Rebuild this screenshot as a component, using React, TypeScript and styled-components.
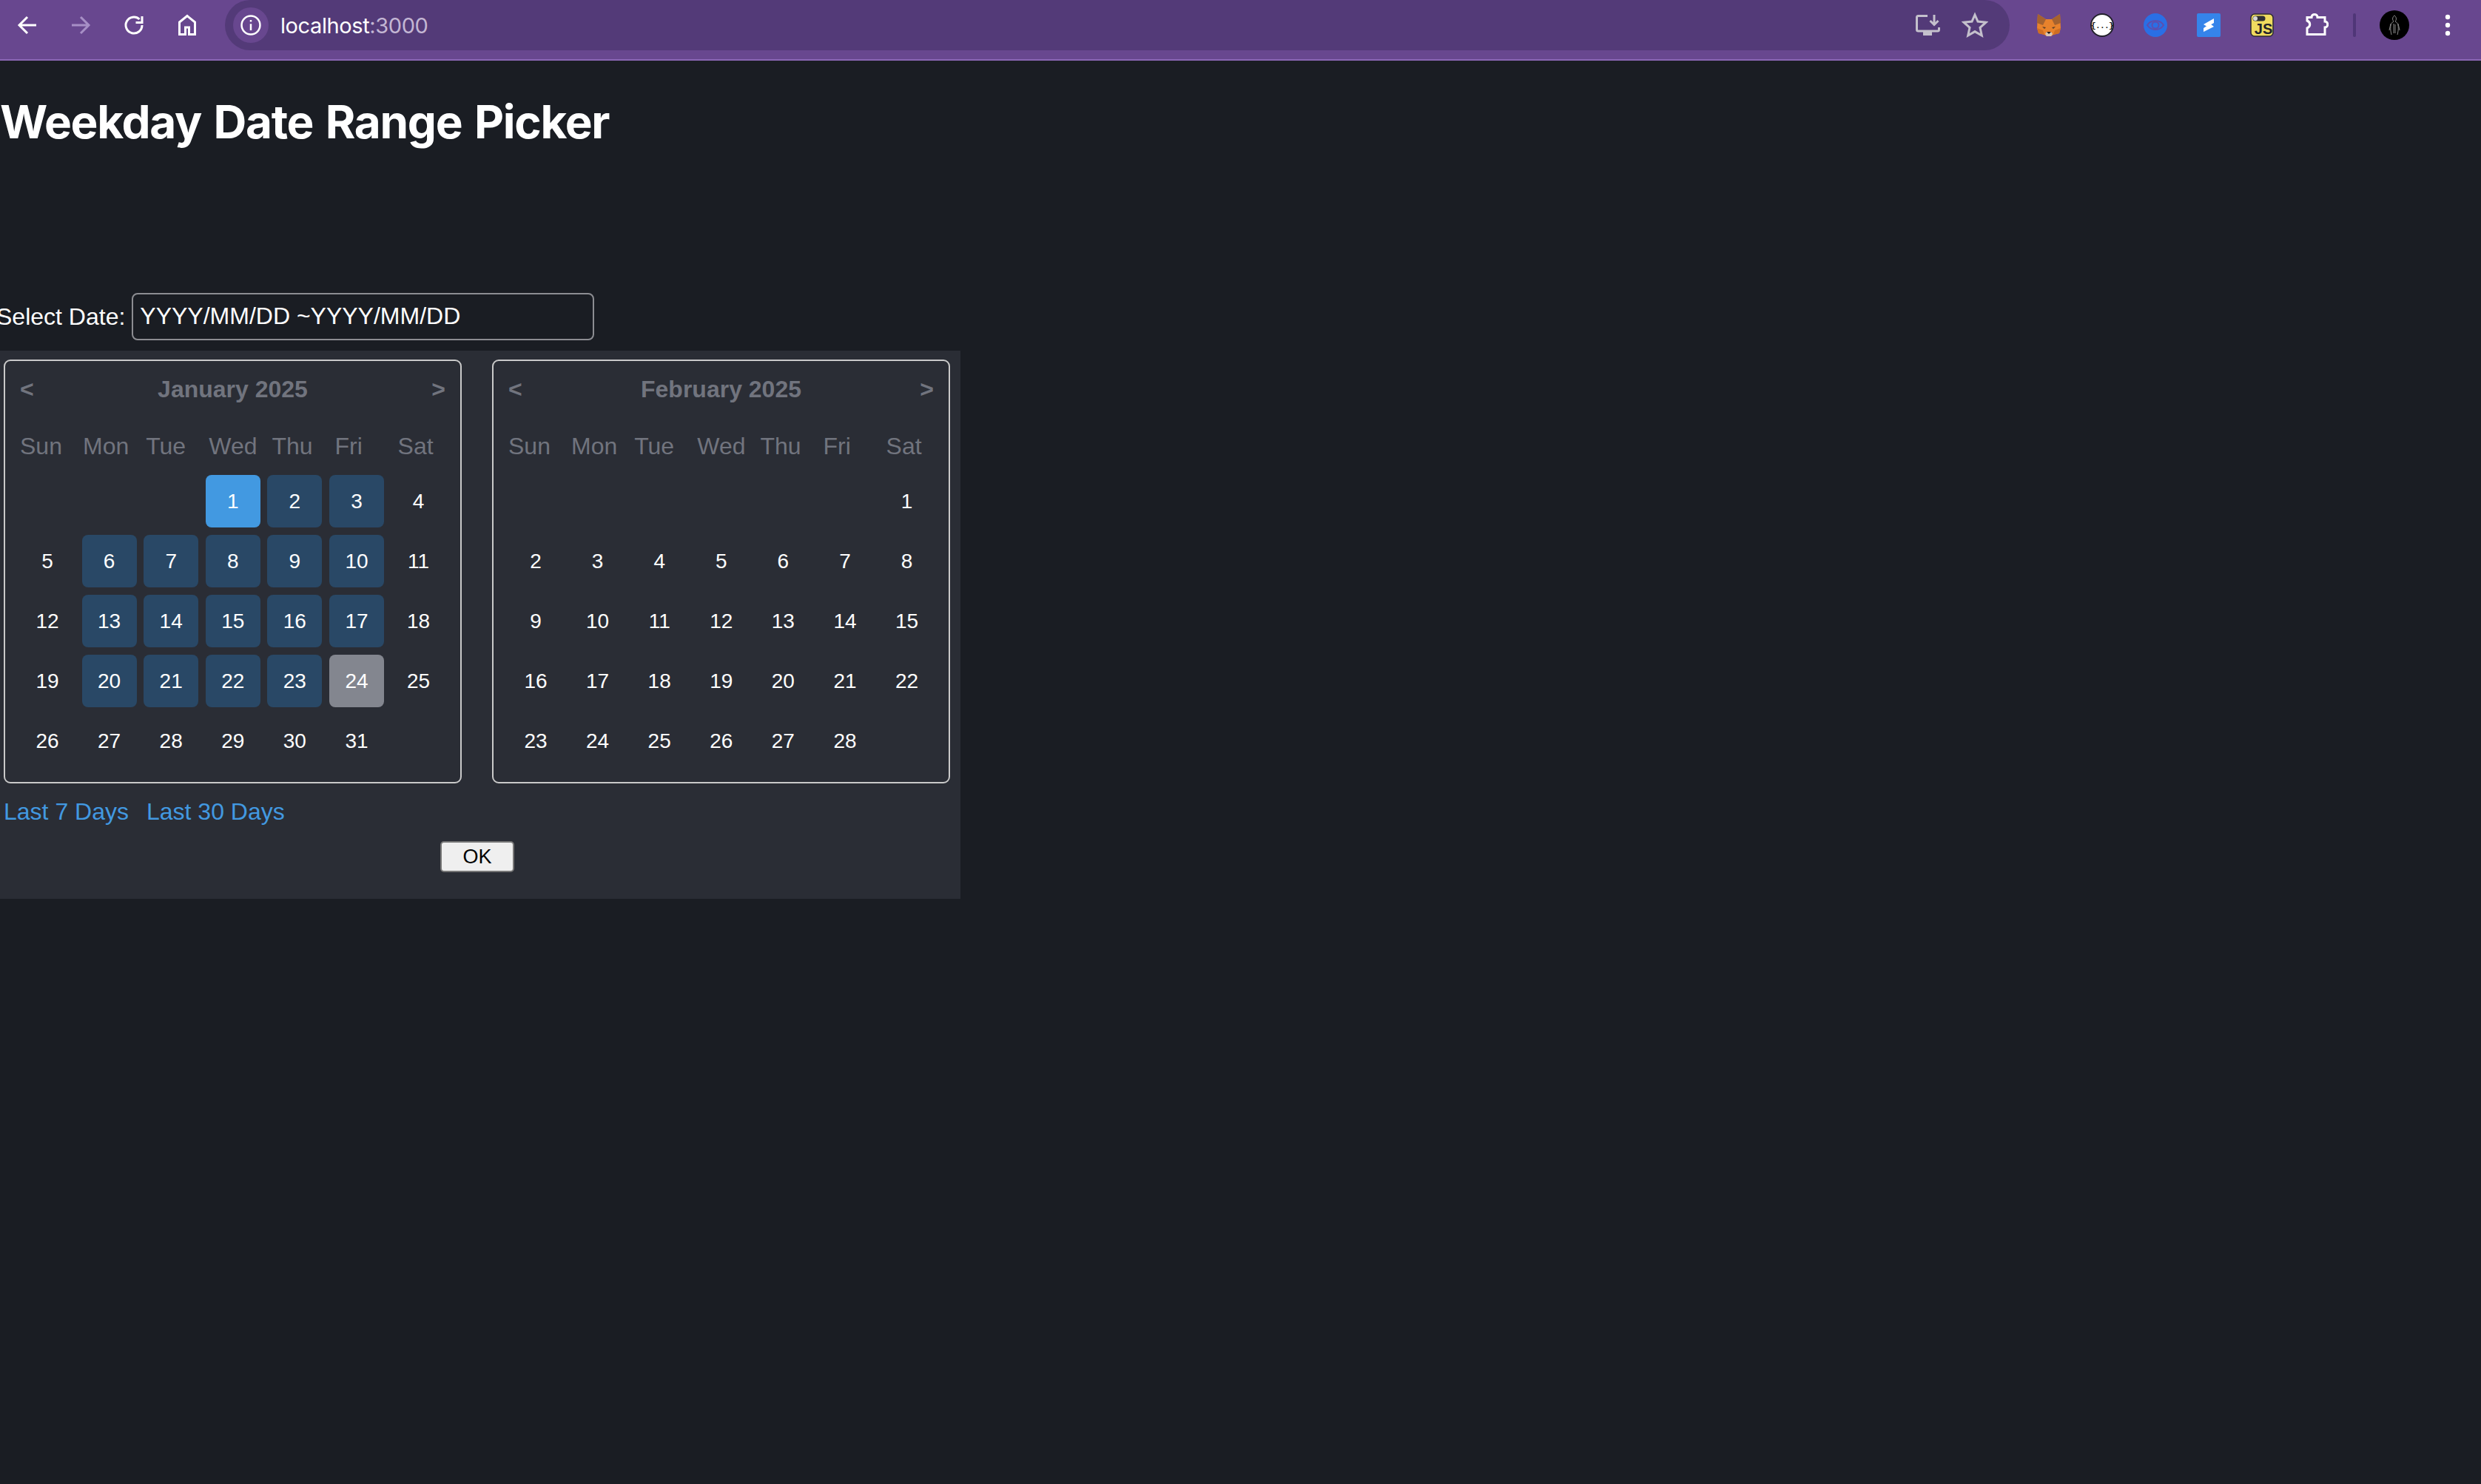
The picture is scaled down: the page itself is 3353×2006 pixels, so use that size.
import styled, { createGlobalStyle } from 'styled-components';

const GlobalStyle = createGlobalStyle`
  html, body {
    margin: 0;
    padding: 0;
    background-color: #1a1d23;
    overflow: hidden;
  }
`;

const Page = styled.div`
  width: 3353px;
  height: 2006px;
  background-color: #1a1d23;
  color: #fff;
  font-family: 'Liberation Sans', Arial, sans-serif;
  overflow: hidden;
`;

const Toolbar = styled.header`
  height: 80px;
  border-bottom: 2px solid #8a66b4;
  background-color: #68478f;
  display: flex;
  align-items: flex-start;
`;

const NavGroup = styled.nav`
  display: flex;
  padding-left: 1px;
  margin-right: 15px;
`;

const ToolButton = styled.div<{ $width?: number }>`
  width: ${(p) => p.$width ?? 72}px;
  height: 68px;
  display: flex;
  align-items: center;
  justify-content: center;
  flex-shrink: 0;
`;

const Omnibox = styled.div`
  width: 2412px;
  height: 68px;
  flex-shrink: 0;
  background-color: #533a78;
  border-radius: 34px;
  display: flex;
  align-items: center;
  padding: 0 0 0 11px;
  box-sizing: border-box;
`;

const SiteChip = styled.div`
  width: 48px;
  height: 48px;
  border-radius: 50%;
  background-color: #68478f;
  display: flex;
  align-items: center;
  justify-content: center;
`;

const Url = styled.span`
  margin-left: 16px;
  font-family: Inter, sans-serif;
  font-size: 29px;
  letter-spacing: -0.4px;
  color: #fff;
  flex: 1;
`;

const UrlPort = styled.span`
  color: #c3b6d3;
`;

const OmniActions = styled.div`
  display: flex;
  margin-right: 15px;
`;

const Extensions = styled.div`
  display: flex;
  margin-left: 17px;
  flex-shrink: 0;
`;

const Separator = styled.div`
  width: 4px;
  height: 32px;
  margin: 18px 18px 0 15px;
  border-radius: 2px;
  background-color: #4f3677;
`;

const Title = styled.h1`
  margin: 43px 0 191px;
  font-family: Inter, sans-serif;
  font-size: 62px;
  letter-spacing: -1.3px;
  word-spacing: 3.2px;
  line-height: 80px;
  font-weight: 700;
`;

const DateRow = styled.div`
  height: 64px;
  margin-bottom: 14px;
  display: flex;
  align-items: center;
`;

const DateLabel = styled.label`
  margin-left: -5px;
  margin-right: 9px;
  font-size: 32px;
`;

const DateInput = styled.input`
  width: 625px;
  height: 64px;
  box-sizing: border-box;
  border: 2px solid #8c8d92;
  border-radius: 8px;
  padding: 0 10px 2px 9px;
  background: transparent;
  color: #fff;
  font-family: inherit;
  font-size: 32px;
  outline: none;
`;

const Panel = styled.section`
  width: 1298px;
  height: 741px;
  box-sizing: border-box;
  padding: 12px 13px 36px 5px;
  background-color: #2a2d35;
`;

const Months = styled.div`
  display: flex;
  gap: 41px;
`;

const MonthBox = styled.div`
  width: 619px;
  height: 573px;
  box-sizing: border-box;
  border: 2px solid #c9c9c9;
  border-radius: 9px;
  padding: 18px 20px 0;
`;

const MonthHead = styled.div`
  height: 40px;
  display: flex;
  align-items: center;
  justify-content: space-between;
  color: #71747e;
  font-size: 32px;
  font-weight: 700;
`;

const WeekHead = styled.div`
  margin-top: 37px;
  display: grid;
  grid-template-columns: repeat(7, 85.1px);
  color: #71747e;
  font-size: 32px;
  line-height: 40px;
`;

const DayGrid = styled.div`
  margin-top: 19px;
  display: grid;
  grid-template-columns: repeat(7, 74px);
  grid-auto-rows: 71px;
  column-gap: 9.6px;
  row-gap: 10px;
`;

type DayKind = 'plain' | 'range' | 'start' | 'end';

const dayColors: Record<DayKind, string> = {
  plain: 'transparent',
  range: '#294866',
  start: '#4299e1',
  end: '#83868f',
};

const Day = styled.div<{ $kind: DayKind }>`
  display: flex;
  align-items: center;
  justify-content: center;
  border-radius: 8px;
  font-size: 28px;
  background-color: ${(p) => dayColors[p.$kind]};
`;

const Shortcuts = styled.div`
  margin-top: 18px;
  display: flex;
  gap: 24px;
  font-size: 32px;
  line-height: 40px;
  color: #4299e1;
`;

const Footer = styled.div`
  margin-top: 20px;
  display: flex;
  justify-content: center;
`;

const OkButton = styled.button`
  width: 100px;
  height: 42px;
  box-sizing: border-box;
  padding: 0;
  border: 2px solid #767676;
  border-radius: 5px;
  background-color: #efefef;
  color: #000;
  font-family: inherit;
  font-size: 27px;
`;

const WEEKDAYS = ['Sun', 'Mon', 'Tue', 'Wed', 'Thu', 'Fri', 'Sat'];

const MONTHS = [
  { name: 'January 2025', offset: 3, days: 31 },
  { name: 'February 2025', offset: 6, days: 28 },
];

// only January has a selection: the 1st to the 24th, weekdays only
const kindOf = (month: number, day: number, offset: number): DayKind => {
  if (month !== 0 || day > 24) return 'plain';
  if (day === 1) return 'start';
  if (day === 24) return 'end';
  const weekday = (offset + day - 1) % 7;
  return weekday === 0 || weekday === 6 ? 'plain' : 'range';
};

const Stroke = ({ children, size = 36, color = '#fff', width = 3 }: { children: React.ReactNode; size?: number; color?: string; width?: number }) => (
  <svg width={size} height={size} viewBox="0 0 36 36" fill="none" stroke={color} strokeWidth={width}>
    {children}
  </svg>
);

const Fox = () => (
  <svg width="32" height="30" viewBox="0 0 32 30">
    <polygon points="1,0 12,7 20,7 31,0 32,19 30,26 22,28 19,30 13,30 10,28 2,26 0,19" fill="#e8822c" />
    <polygon points="1,0 12,7 8,15 0,12" fill="#a5622f" />
    <polygon points="31,0 20,7 24,15 32,12" fill="#a5622f" />
    <polygon points="0,19 8,22 10,28 2,26" fill="#cf6e22" />
    <polygon points="32,19 24,22 22,28 30,26" fill="#cf6e22" />
    <polygon points="7,17 12,18 10,20" fill="#5a3c28" />
    <polygon points="25,17 20,18 22,20" fill="#5a3c28" />
    <polygon points="11,27 13,24 19,24 21,27 19,30 13,30" fill="#d8c4b0" />
    <polygon points="13,24 19,24 16,27" fill="#1d1a1a" />
  </svg>
);

const Braces = () => (
  <svg width="32" height="32" viewBox="0 0 32 32">
    <circle cx="16" cy="16" r="15" fill="#fff" stroke="#23222c" strokeWidth="2" />
    <text x="16" y="20" textAnchor="middle" fontSize="11" fontFamily="Liberation Mono" fontWeight="700" letterSpacing="-0.6" fill="#111">
      {'{...}'}
    </text>
  </svg>
);

const Eye = () => (
  <svg width="32" height="32" viewBox="0 0 32 32">
    <circle cx="16" cy="16" r="16" fill="#2a6fe5" />
    <path d="M5 16 C10 8 22 8 27 16 C22 24 10 24 5 16 Z" fill="none" stroke="#5b4fb0" strokeWidth="2" />
    <circle cx="16" cy="16" r="4.5" fill="none" stroke="#5b4fb0" strokeWidth="2" />
  </svg>
);

const Stack = () => (
  <svg width="32" height="32" viewBox="0 0 32 32">
    <rect width="32" height="32" rx="2" fill="#3584ea" />
    <path d="M23 7 L9 15 L14 18 L23 13 Z M9 25 L23 18 L18 14 L9 20 Z" fill="#fff" />
  </svg>
);

const JsBadge = () => (
  <svg width="32" height="32" viewBox="0 0 32 32">
    <rect x="1" y="1" width="30" height="30" rx="5" fill="#f0db5f" stroke="#2c2a33" strokeWidth="1.5" />
    <rect x="3.5" y="3.5" width="17" height="7" rx="3.5" fill="#2f2f33" />
    <circle cx="7" cy="7" r="3" fill="#d8d8d8" />
    <text x="18" y="28" textAnchor="middle" fontSize="20" fontFamily="Liberation Sans" fontWeight="700" fill="#22222a">
      JS
    </text>
  </svg>
);

const Avatar = () => (
  <svg width="40" height="40" viewBox="0 0 40 40">
    <circle cx="20" cy="20" r="20" fill="#000" />
    <path d="M20 7 C17 9 17 13 19 15 C14 17 14 25 16 33 M20 7 C23 9 23 13 21 15 C26 17 26 25 24 33 M19 18 L19 31 M21 19 L21 31 M15 18 L13 27 M25 18 L27 27" fill="none" stroke="#8a8a8a" strokeWidth="1" />
  </svg>
);

function App() {
  return (
    <Page>
      <GlobalStyle />
      <Toolbar>
        <NavGroup>
          <ToolButton>
            <Stroke><path d="M30 18H8M18 7L7 18l11 11" /></Stroke>
          </ToolButton>
          <ToolButton>
            <Stroke color="#a78fc6"><path d="M6 18h22M18 7l11 11-11 11" /></Stroke>
          </ToolButton>
          <ToolButton>
            <Stroke><path d="M29 18A11 11 0 1 1 25.5 10" /><path d="M29 6v8.5h-8.5" /></Stroke>
          </ToolButton>
          <ToolButton>
            <Stroke><path d="M18 5.5L7.5 14v16.5h8V21h5v9.5h8V14Z" /></Stroke>
          </ToolButton>
        </NavGroup>
        <Omnibox>
          <SiteChip>
            <Stroke size={32} width={2.8}>
              <circle cx="18" cy="18" r="14" />
              <path d="M18 16v10M18 10v3" />
            </Stroke>
          </SiteChip>
          <Url>
            localhost<UrlPort>:3000</UrlPort>
          </Url>
          <OmniActions>
            <ToolButton $width={64}>
              <Stroke color="#c4c0cc">
                <path d="M18 5.5H5.5a2 2 0 0 0-2 2V24a2 2 0 0 0 2 2h26a2 2 0 0 0 2-2v-3" />
                <path d="M27 4v13M21.5 12l5.5 5.5 5.5-5.5" />
                <rect x="12" y="27" width="12" height="5" fill="#c4c0cc" stroke="none" />
              </Stroke>
            </ToolButton>
            <ToolButton $width={64}>
              <Stroke color="#c4c0cc">
                <path d="M18 4l4 9 11 1.2-8 7.2 2.3 10.6-9.3-5.4-9.3 5.4 2.3-10.6-8-7.2L14 13Z" />
              </Stroke>
            </ToolButton>
          </OmniActions>
        </Omnibox>
        <Extensions>
          <ToolButton><Fox /></ToolButton>
          <ToolButton><Braces /></ToolButton>
          <ToolButton><Eye /></ToolButton>
          <ToolButton><Stack /></ToolButton>
          <ToolButton><JsBadge /></ToolButton>
          <ToolButton>
            <Stroke>
              <path d="M7 7.5h6C13 2 21 2 21 7.5h10V13c5 0 5 8 0 8v9.5H7V22c5-2 5-8 0-10Z" />
            </Stroke>
          </ToolButton>
          <Separator />
          <ToolButton $width={68}><Avatar /></ToolButton>
          <ToolButton $width={76}>
            <svg width="8" height="30" viewBox="0 0 8 30" fill="#fff">
              <circle cx="4" cy="4" r="3.2" />
              <circle cx="4" cy="15" r="3.2" />
              <circle cx="4" cy="26" r="3.2" />
            </svg>
          </ToolButton>
        </Extensions>
      </Toolbar>

      <Title>Weekday Date Range Picker</Title>

      <DateRow>
        <DateLabel>Select Date:</DateLabel>
        <DateInput readOnly value="YYYY/MM/DD ~YYYY/MM/DD" />
      </DateRow>

      <Panel>
        <Months>
          {MONTHS.map((month, index) => (
            <MonthBox key={month.name}>
              <MonthHead>
                <span>&lt;</span>
                <span>{month.name}</span>
                <span>&gt;</span>
              </MonthHead>
              <WeekHead>
                {WEEKDAYS.map((name) => (
                  <span key={name}>{name}</span>
                ))}
              </WeekHead>
              <DayGrid>
                {Array.from({ length: month.offset }, (_, i) => (
                  <Day key={`empty-${i}`} $kind="plain" />
                ))}
                {Array.from({ length: month.days }, (_, i) => (
                  <Day key={i} $kind={kindOf(index, i + 1, month.offset)}>
                    {i + 1}
                  </Day>
                ))}
              </DayGrid>
            </MonthBox>
          ))}
        </Months>
        <Shortcuts>
          <span>Last 7 Days</span>
          <span>Last 30 Days</span>
        </Shortcuts>
        <Footer>
          <OkButton>OK</OkButton>
        </Footer>
      </Panel>
    </Page>
  );
}

export default App;
